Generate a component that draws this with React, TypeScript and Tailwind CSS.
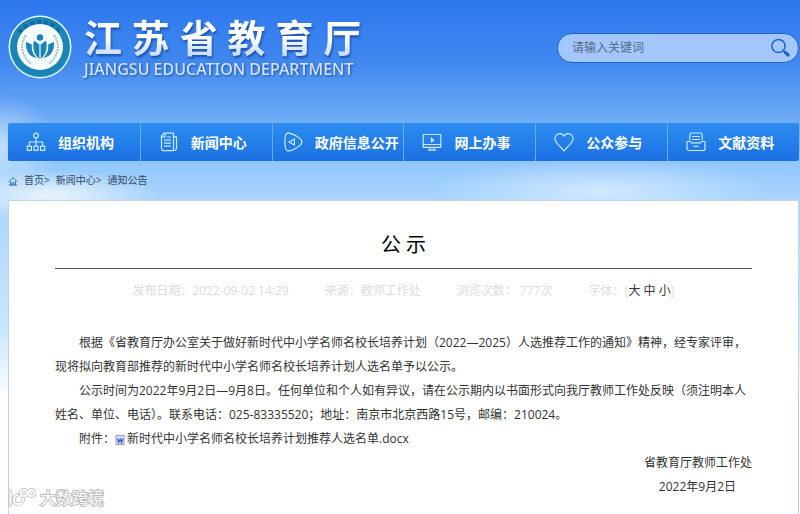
import React from "react";

const stroke = {
  fill: "none",
  stroke: "currentColor",
  strokeWidth: 1.2,
  strokeLinecap: "round" as const,
  strokeLinejoin: "round" as const,
};

const OrgIcon = () => (
  <svg viewBox="0 0 20 20" className="w-5 h-5 shrink-0" {...stroke}>
    <circle cx="10" cy="3.5" r="2.4" />
    <path d="M10 6v7.800M3.300 14v-4h13.400v4" />
    <rect x="1.2" y="14.2" width="4.2" height="4.2" />
    <rect x="7.9" y="14.2" width="4.2" height="4.2" />
    <rect x="14.6" y="14.2" width="4.2" height="4.2" />
  </svg>
);

const NewsIcon = () => (
  <svg viewBox="0 0 20 20" className="w-5 h-5 shrink-0" {...stroke}>
    <path d="M5 1.200h9.500v17.400H4.500a2 2 0 0 1-2-2V4z" />
    <path d="M14.500 4.800h3v12a1.800 1.800 0 0 1-3 .8" />
    <path d="M2.800 4.800H6V1.800M5.500 8.200h6M5.500 11.200h6M5.500 14.200h6M8.500 5h3" />
  </svg>
);

const InfoIcon = () => (
  <svg viewBox="0 0 20 20" className="w-5 h-5 shrink-0" {...stroke}>
    <path d="M4.500 1.200C8 .4 18.800 6 18.800 10S8 19.600 4.500 18.800C1 18 1 2 4.500 1.200z" />
    <path d="M6 10l5.400-3v6z" />
  </svg>
);

const OnlineIcon = () => (
  <svg viewBox="0 0 20 20" className="w-5 h-5 shrink-0" {...stroke}>
    <rect x="1.200" y="2.500" width="17.600" height="12.800" />
    <path d="M1.200 12.500h17.600M8.200 15.500v2.700M11.800 15.500v2.700M6.500 18.200h7" />
    <path d="M9.400 5.800v4l1-1 1.400.2z" fill="currentColor" />
  </svg>
);

const HeartIcon = () => (
  <svg viewBox="0 0 20 20" className="w-5 h-5 shrink-0" {...stroke}>
    <path d="M10 4.200C8.300 1 4.400 1 2.400 3.100c-2 2.100-1.700 5.400.3 7.700L10 18.800l7.300-8c2-2.300 2.300-5.600.3-7.700-2-2.100-5.900-2.100-7.600 1.100z" />
  </svg>
);

const ArchiveIcon = () => (
  <svg viewBox="0 0 20 20" className="w-5 h-5 shrink-0" {...stroke}>
    <path d="M3.800 8V3a2 2 0 0 1 2-2h8.400a2 2 0 0 1 2 2v5" />
    <path d="M6.500 4.500h7M6.500 7.500h7" />
    <path d="M1 9.500h3.500l1 1.400h9l1-1.400H19v7a2 2 0 0 1-2 2H3a2 2 0 0 1-2-2zM8 14.400h4" />
  </svg>
);

const Emblem = () => (
  <svg viewBox="0 0 64 64" className="w-16 h-16 shrink-0">
    <circle cx="32" cy="32" r="31.500" fill="#e4f9fd" />
    <circle cx="32" cy="32" r="30" fill="#1a86b8" />
    <circle cx="32" cy="32" r="23" fill="#f4fcfd" />
    {/* lettering ring, upper half only */}
    <path
      d="M11.500 17.500a25 25 0 0 1 41 0"
      fill="none"
      stroke="#0d5680"
      strokeWidth="3.600"
      strokeDasharray="4 3"
      opacity=".6"
    />
    <path
      d="M18 20C11.500 29 13 41 23 48.500M46 20C52.500 29 51 41 41 48.500"
      fill="none"
      stroke="#9cc3c4"
      strokeWidth="2"
      strokeDasharray="2 1"
    />
    <circle cx="32" cy="22.500" r="3.200" fill="#1a86b8" />
    <path
      d="M31.400 44V29.500l-5.400-4c-1.500 6-1 13 5.400 18.500zM32.600 44V29.500l5.400-4c1.500 6 1 13-5.400 18.500z"
      fill="#1a86b8"
    />
    <path
      d="M29 43c-4.500-4-5.500-8-5.200-13.500L18 27c-.5 8.500 3 15 11 16zM35 43c4.500-4 5.500-8 5.200-13.500L46 27c.5 8.500-3 15-11 16z"
      fill="#1a86b8"
    />
  </svg>
);

const HomeIcon = () => (
  <svg viewBox="0 0 10 10" className="w-[10px] h-[10px] text-[#2a6bb0]" {...stroke}>
    <path d="M.8 5.500L5 1.500l4.200 4M1.200 9h7.600M2.500 5.500V9M7.500 5.500V9M4.200 9V6.500h1.600V9" strokeWidth="0.900" />
  </svg>
);

const DocIcon = () => (
  <svg viewBox="0 0 10 10" className="inline w-[10px] h-[10px] mr-[2px]">
    <rect x="1" y=".5" width="8" height="9" fill="#dfe4fb" stroke="#8d99d8" />
    <path d="M2.500 3.500l1.200 4L5.200 4l1.400 3.500 1.100-4" fill="none" stroke="#3f52c4" strokeWidth="1.200" />
  </svg>
);

const navItems = [
  { label: "组织机构", icon: <OrgIcon /> },
  { label: "新闻中心", icon: <NewsIcon /> },
  { label: "政府信息公开", icon: <InfoIcon />, wide: true },
  { label: "网上办事", icon: <OnlineIcon /> },
  { label: "公众参与", icon: <HeartIcon /> },
  { label: "文献资料", icon: <ArchiveIcon /> },
];

const Header = () => (
  <header className="flex justify-between items-start pt-[15px] pb-11">
    <a href="#" className="flex gap-3">
      <Emblem />
      <div className="text-white whitespace-nowrap">
        <h1 className="text-[38px] leading-[45px] font-bold bg-linear-to-b from-white from-50% to-[#b9d2fb] bg-clip-text text-transparent drop-shadow-[1px_2px_1px_#1c50a8]">
          江 苏 省 教 育 厅
        </h1>
        <p className="font-['Noto_Sans',sans-serif] font-medium text-[16px] leading-[18px] text-[#d3e3fd] drop-shadow-[1px_1px_1px_#1c50a8]">
          JIANGSU EDUCATION DEPARTMENT
        </p>
      </div>
    </a>
    <form className="mt-[18px] flex items-center w-[242px] h-[30px] rounded-full border border-[#2263c4] bg-[#a3c6fb] pl-[14px] pr-2">
      <input
        type="text"
        aria-label="请输入关键词"
        placeholder="请输入关键词"
        className="flex-1 min-w-0 text-[12px] bg-transparent outline-none placeholder:text-[#556a8c]"
      />
      <button type="button" aria-label="搜索" className="text-[#1c63bd]">
        <svg viewBox="0 0 20 20" className="w-5 h-5" {...stroke}>
          <circle cx="8.500" cy="8" r="6.600" strokeWidth="1.500" />
          <path d="M13.200 12.600l1.800 1.500" strokeWidth="1.500" />
          <path d="M15.500 14.600l2.600 2.400" strokeWidth="3.200" />
        </svg>
      </button>
    </form>
  </header>
);

const Nav = () => (
  <nav className="grid grid-cols-6 rounded-xs bg-linear-to-b from-[#2e8df0] to-[#1a70e3]">
    {navItems.map((item, index) => (
      <a
        key={index}
        href="#"
        className={`flex items-center gap-3 h-[38px] text-[14px] font-bold text-white whitespace-nowrap ${
          item.wide ? "pl-[10px]" : "pl-[18px]"
        } ${index > 0 ? "border-l border-[#62aef6]" : ""}`}
      >
        <span className="text-[#c9eaff]">{item.icon}</span>
        {item.label}
      </a>
    ))}
  </nav>
);

const Article = () => (
  <article className="flex-1 bg-white border border-b-0 border-[#c3d3df] px-[46px] text-[12px] leading-6 text-[#333]">
    <h2 className="pt-7 pb-[7px] text-[20px] leading-8 text-center text-black border-b border-[#555]">
      公 示
    </h2>
    <div className="flex justify-center gap-9 pt-[10px] text-[#dcdcdc] whitespace-nowrap">
      <span>发布日期：2022-09-02 14:29</span>
      <span>来源：教师工作处</span>
      <span>浏览次数： 777次</span>
      <span>
        字体：[<button type="button" className="text-[#333]">大</button>{" "}
        <button type="button" className="text-[#333]">中</button>{" "}
        <button type="button" className="text-[#333]">小</button>]
      </span>
    </div>
    <div className="pt-7">
      <p className="indent-6">
        根据《省教育厅办公室关于做好新时代中小学名师名校长培养计划（2022—2025）人选推荐工作的通知》精神，经专家评审，现将拟向教育部推荐的新时代中小学名师名校长培养计划人选名单予以公示。
      </p>
      <p className="indent-6">
        公示时间为2022年9月2日—9月8日。任何单位和个人如有异议，请在公示期内以书面形式向我厅教师工作处反映（须注明本人姓名、单位、电话）。联系电话：025-83335520；地址：南京市北京西路15号，邮编：210024。
      </p>
      <p className="indent-6">
        附件：
        <a href="#">
          <DocIcon />
          新时代中小学名师名校长培养计划推荐人选名单.docx
        </a>
      </p>
      <p className="text-right">省教育厅教师工作处</p>
      <p className="text-right pr-4">2022年9月2日</p>
    </div>
  </article>
);

const Watermark = () => (
  <div className="absolute left-2 bottom-1 flex items-center gap-1 text-[16px] leading-6 text-white [-webkit-text-stroke:2px_#bdbdbd] [paint-order:stroke_fill]">
    <svg viewBox="0 0 28 20" className="w-7 h-5" fill="none" strokeLinecap="round">
      <g stroke="#bdbdbd" strokeWidth="3.600">
        <path d="M2.500 3v14M9 7c-5 3-4 9 1 9 4 0 5-3 5-5" />
        <circle cx="16" cy="5" r="3.200" />
        <circle cx="23.500" cy="5" r="3.200" />
      </g>
      <g stroke="#fff" strokeWidth="2">
        <path d="M2.500 3v14M9 7c-5 3-4 9 1 9 4 0 5-3 5-5" />
        <circle cx="16" cy="5" r="3.200" />
        <circle cx="23.500" cy="5" r="3.200" />
      </g>
    </svg>
    <span>大数跨境</span>
  </div>
);

const App = () => {
  return (
    <div className="relative min-h-screen flex flex-col pl-2 pr-px font-['Open_Sans','Noto_Sans_CJK_SC',sans-serif] bg-[radial-gradient(ellipse_60px_50px_at_0px_145px,#ffffff80,transparent),radial-gradient(ellipse_110px_25px_at_50px_195px,#ffffffc0,transparent),radial-gradient(ellipse_170px_30px_at_600px_190px,#ffffff80,transparent),linear-gradient(to_bottom,#2d78ee_0px,#3f87ee_60px,#6aa8f6_115px,#93c8fc_165px,#a9d5fd_200px,#c9e6ff_330px,#ffffff_400px)]">
      <Header />
      <Nav />
      <div className="flex items-center gap-[6px] h-[39px] text-[10px] text-[#34495e]">
        <HomeIcon />
        <span><a href="#">首页</a>&gt;</span>
        <span><a href="#">新闻中心</a>&gt;</span>
        <a href="#">通知公告</a>
      </div>
      <Article />
      <Watermark />
    </div>
  );
};

export default App;
